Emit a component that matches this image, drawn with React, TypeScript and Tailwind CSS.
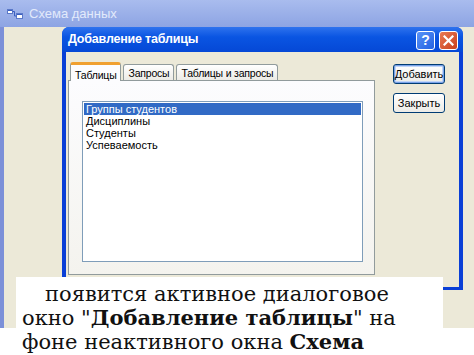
import React from 'react';

const ui = { fontFamily: '"Liberation Sans", Arial, sans-serif' };
const serif = { fontFamily: '"DejaVu Serif", "Liberation Serif", serif' };

const tables = ['Группы студентов', 'Дисциплины', 'Студенты', 'Успеваемость'];

function SchemaIcon() {
  return (
    <svg width="16" height="12" viewBox="0 0 16 12">
      <rect x="0.5" y="1.5" width="5" height="4" fill="#ffffff" stroke="#5a78c8" />
      <rect x="9.5" y="5.5" width="6" height="5" fill="#ffffff" stroke="#5a78c8" />
      <rect x="1" y="2" width="4" height="1" fill="#3a5fc0" />
      <rect x="10" y="6" width="5" height="1" fill="#3a5fc0" />
      <path d="M5.5 3.5 H7.5 V8 H9.5" stroke="#3a5fc0" fill="none" />
    </svg>
  );
}

function HelpButton() {
  return (
    <div className="w-[19px] h-[19px] rounded-[3px] border border-white bg-[linear-gradient(135deg,#5a93f7,#2261e2)] flex items-center justify-center text-white text-[14px] font-bold leading-none">
      ?
    </div>
  );
}

function CloseButton() {
  return (
    <div className="w-[19px] h-[19px] rounded-[3px] border border-white bg-[linear-gradient(135deg,#e97a55,#c9401c)] flex items-center justify-center">
      <svg width="11" height="11" viewBox="0 0 11 11">
        <path d="M1.5 1.5 L9.5 9.5 M9.5 1.5 L1.5 9.5" stroke="#fff" strokeWidth="2.2" strokeLinecap="square" />
      </svg>
    </div>
  );
}

function XpButton({ label, isDefault }: { label: string; isDefault?: boolean }) {
  return (
    <div
      className={`w-[52px] h-[20px] rounded-[3px] border border-[#003c74] bg-[linear-gradient(#ffffff,#ecebe6)] flex items-center justify-center text-[11px] text-black ${
        isDefault ? 'shadow-[inset_0_0_0_1px_#7aa2e8,inset_0_0_0_2px_#c2d6f7]' : ''
      }`}
    >
      {label}
    </div>
  );
}

export default function App() {
  return (
    <div className="relative w-[474px] h-[355px] bg-white overflow-hidden">
      {/* Inactive background window: "Схема данных" */}
      <div className="h-[328px] flex flex-col border-l-[4px] border-[#7c90d8]" style={ui}>
        <div className="h-[27px] shrink-0 bg-[linear-gradient(#a9bcee,#8da4e3)] flex items-center gap-[6px] pl-[3px] -ml-[4px]">
          <div className="ml-[4px]">
            <SchemaIcon />
          </div>
          <span className="text-[13px] text-[#e2eafb]">Схема данных</span>
        </div>

        <div className="flex-1 bg-[#ece9d8] pl-[58px]">
          {/* Active dialog: "Добавление таблицы" */}
          <div className="w-[401px] h-[263px] flex flex-col rounded-t-[7px] bg-[#0a3fd6] overflow-hidden">
            <div className="h-[25px] shrink-0 bg-[linear-gradient(#2f73ee,#0a55e2_40%,#0548d6)] flex items-center justify-between pl-[6px] pr-[5px]">
              <span className="text-[12.5px] font-bold text-white tracking-[-0.2px]">Добавление таблицы</span>
              <div className="flex gap-[4px] mt-[1px]">
                <HelpButton />
                <CloseButton />
              </div>
            </div>

            <div className="flex-1 mx-[4px] mb-[3px] bg-[#ece9d8] flex pt-[10px] pl-[2px]">
              {/* Tabs + panel */}
              <div className="w-[307px] flex flex-col">
                <div className="h-[18px] flex items-end pl-[2px] gap-[2px] text-[10.5px] tracking-[-0.2px] text-black">
                  <div className="h-[19px] -mb-[1px] relative z-10 px-[4px] pt-[3px] rounded-t-[3px] border border-[#919b9c] border-b-0 border-t-[3px] border-t-[#f0a030] bg-[#fcfcfe]">
                    Таблицы
                  </div>
                  <div className="h-[16px] px-[4px] pt-[1px] rounded-t-[3px] border border-[#919b9c] border-b-0 bg-[linear-gradient(#ffffff,#ecebe6)]">
                    Запросы
                  </div>
                  <div className="h-[16px] px-[4px] pt-[1px] rounded-t-[3px] border border-[#919b9c] border-b-0 bg-[linear-gradient(#ffffff,#ecebe6)]">
                    Таблицы и запросы
                  </div>
                </div>
                <div className="h-[195px] border border-[#919b9c] bg-[linear-gradient(#fcfcfe,#f4f3ee)] pt-[20px] pl-[13px] pr-[11px] pb-[12px]">
                  <div className="h-full bg-white border border-[#7f9db9] pt-[1px] px-[1px] text-[11px] leading-[12px]">
                    {tables.map((t, i) => (
                      <div
                        key={t}
                        className={`pl-[2px] ${i === 0 ? 'bg-[#316ac5] text-white' : 'text-black'}`}
                      >
                        {t}
                      </div>
                    ))}
                  </div>
                </div>
              </div>

              {/* Buttons */}
              <div className="flex flex-col gap-[9px] ml-[18px] pt-[2px]">
                <XpButton label="Добавить" isDefault />
                <XpButton label="Закрыть" />
              </div>
            </div>
          </div>
        </div>
      </div>

      {/* Caption laid over the screenshot */}
      <div
        className="absolute left-[16px] top-[277px] w-[427px] h-[51px] bg-white pl-[6px] pt-[5px] text-[21px] leading-[24px] text-[#111] whitespace-nowrap"
        style={serif}
      >
        <p className="indent-[23px]">
          появится активное диалоговое
          <br />
          окно "<b>Добавление таблицы</b>" на
          <br />
          фоне неактивного окна <b>Схема</b>
        </p>
      </div>
    </div>
  );
}
